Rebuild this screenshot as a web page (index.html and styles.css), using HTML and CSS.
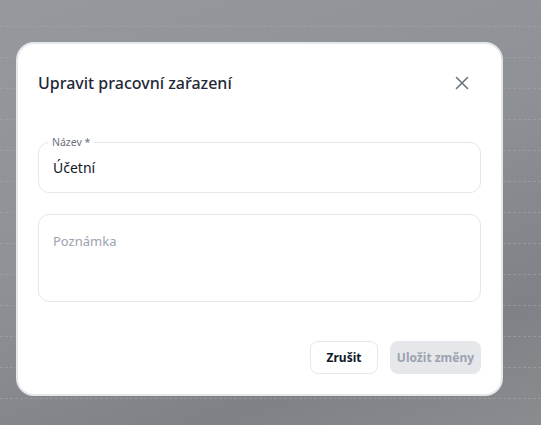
FILE: index.html
```html
<!DOCTYPE html>
<html lang="cs">
<head>
<meta charset="utf-8">
<link rel="stylesheet" href="styles.css">
</head>
<body>
<div class="backdrop">
  <div class="rows">
    <div class="row"></div><div class="row"></div><div class="row"></div><div class="row"></div>
    <div class="row"></div><div class="row"></div><div class="row"></div><div class="row"></div>
    <div class="row"></div><div class="row"></div><div class="row"></div><div class="row"></div>
    <div class="row"></div><div class="row"></div>
  </div>
  <div class="modal">
    <div class="modal-head">
      <h2 class="modal-title">Upravit pracovní zařazení</h2>
      <button class="close" aria-label="Zavřít">
        <svg width="14" height="14" viewBox="0 0 14 14"><path d="M1.5 1.5 L12.5 12.5 M12.5 1.5 L1.5 12.5" stroke="#6b7280" stroke-width="1.6" stroke-linecap="round" fill="none"/></svg>
      </button>
    </div>
    <fieldset class="field">
      <legend class="legend">Název *</legend>
      <div class="value">Účetní</div>
    </fieldset>
    <div class="textarea"><span class="placeholder">Poznámka</span></div>
    <div class="actions">
      <button class="btn btn-cancel">Zrušit</button>
      <button class="btn btn-save">Uložit změny</button>
    </div>
  </div>
</div>
</body>
</html>
```
FILE: styles.css
```css
* { box-sizing: border-box; }
html, body { margin: 0; padding: 0; }
body {
  width: 541px;
  height: 425px;
  overflow: hidden;
  font-family: "Noto Sans", "Open Sans", sans-serif;
}
.backdrop {
  position: relative;
  width: 541px;
  height: 425px;
  background: linear-gradient(160deg, #95989d 0%, #8e9196 45%, #7f8186 80%, #8a8c90 100%);
  overflow: hidden;
}
.rows {
  display: flex;
  flex-direction: column;
  padding-top: 26px;
}
.row {
  height: 31px;
  flex: none;
  border-top: 1px dashed rgba(165, 167, 171, 0.55);
}
.modal {
  position: absolute;
  left: 16px;
  top: 42px;
  width: 487px;
  height: 354px;
  background: #fff;
  border: 2px solid #e6e7ea;
  border-radius: 18px;
  padding: 25px 20px 20px;
  display: flex;
  flex-direction: column;
}
.modal-head {
  display: flex;
  align-items: center;
  justify-content: space-between;
  height: 28px;
}
.modal-title {
  margin: 0;
  font-size: 16px;
  font-weight: 500;
  color: #1f2937;
  line-height: 28px;
}
.close {
  border: 0;
  background: none;
  padding: 0;
  width: 20px;
  height: 20px;
  display: flex;
  align-items: center;
  justify-content: center;
  margin-right: 9px;
  cursor: pointer;
}
.field {
  margin: 39px 0 0;
  padding: 0 14px;
  height: 59px;
  border: 1px solid #e5e7eb;
  border-radius: 11px;
  min-width: 0;
}
.legend {
  padding: 0 4px;
  margin-left: -5px;
  font-size: 10.5px;
  color: #6b7280;
  line-height: 12px;
}
.value {
  font-size: 14px;
  color: #111827;
  line-height: 20px;
  margin-top: 10px;
}
.textarea {
  margin-top: 21px;
  height: 90px;
  border: 1px solid #e5e7eb;
  border-radius: 11px;
  padding: 14px 14px;
}
.placeholder {
  font-size: 13px;
  color: #9ca3af;
  line-height: 20px;
}
.actions {
  margin-top: 39px;
  display: flex;
  justify-content: flex-end;
  gap: 12px;
}
.btn {
  height: 33px;
  border-radius: 8px;
  font-family: "Noto Sans", sans-serif;
  font-size: 12px;
  font-weight: 700;
  padding: 0;
  cursor: pointer;
}
.btn-cancel {
  width: 68px;
  background: #fff;
  border: 1px solid #e5e7eb;
  color: #111827;
}
.btn-save {
  width: 91px;
  background: #e5e7eb;
  border: 0;
  color: #9ca3af;
}
```
